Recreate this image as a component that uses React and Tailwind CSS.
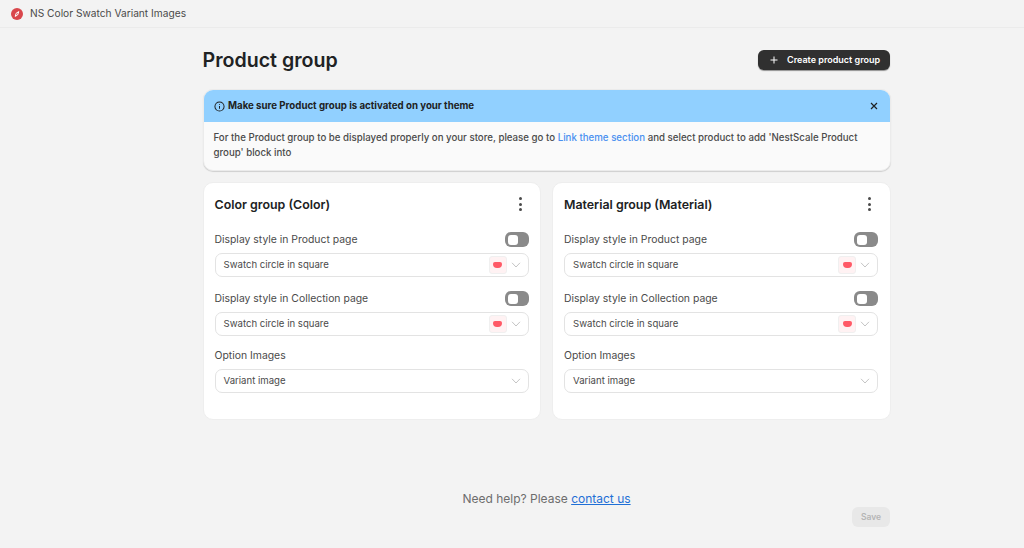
import React from "react";

const Info = () => (
  <svg width="11" height="11" viewBox="0 0 12 12" fill="none" stroke="#202223" strokeWidth="1.1" className="shrink-0">
    <circle cx="6" cy="6" r="5" />
    <path d="M6 5.4v3M6 3.4v.8" />
  </svg>
);

const Chevron = () => (
  <svg width="10" height="6" viewBox="0 0 10 6" fill="none" stroke="#c4c4c4" strokeWidth="1" className="shrink-0">
    <path d="M1 .8 5 5 9 .8" />
  </svg>
);

const Dots = () => (
  <div className="flex flex-col gap-[2.5px] mr-[7px] mb-[2px]">
    <span className="w-[3px] h-[3px] rounded-full bg-[#4a4a4a]" />
    <span className="w-[3px] h-[3px] rounded-full bg-[#4a4a4a]" />
    <span className="w-[3px] h-[3px] rounded-full bg-[#4a4a4a]" />
  </div>
);

const Toggle = () => (
  <div className="w-[24px] h-[15px] rounded-[6px] bg-[#8a8a8a] flex items-center pl-[3px]">
    <span className="w-[10px] h-[10px] rounded-[3px] bg-white" />
  </div>
);

const Select = ({ label, swatch }) => (
  <div className="h-[24px] rounded-[7px] border border-[#e3e3e3] bg-white flex items-center pl-[8px] pr-[7px] text-[9.6px] text-[#4a4a4a]">
    <span className="flex-1">{label}</span>
    {swatch && (
      <span className="w-[18px] h-[18px] rounded-[3px] border border-[#f0f0f0] bg-[#fff2f3] flex items-center justify-center mr-[4px]">
        <span className="w-[9px] h-[6px] rounded-b-[4px] rounded-t-[2px] bg-[#ff5a67]" />
      </span>
    )}
    <Chevron />
  </div>
);

const Row = ({ label }) => (
  <div className="flex items-center justify-between h-[15px] mb-[6px]">
    <span className="text-[10.4px] text-[#4a4a4a]">{label}</span>
    <Toggle />
  </div>
);

const Card = ({ title }) => (
  <div className="flex-1 h-[238px] rounded-[10px] bg-white border border-[#eeeeee] pt-[12px] pl-[11px] pr-[11.5px]">
    <div className="flex items-center justify-between h-[20px] mb-[17px]">
      <h2 className="text-[12.4px] font-semibold text-[#202223]">{title}</h2>
      <Dots />
    </div>
    <Row label="Display style in Product page" />
    <Select label="Swatch circle in square" swatch />
    <div className="h-[14px]" />
    <Row label="Display style in Collection page" />
    <Select label="Swatch circle in square" swatch />
    <div className="h-[12px]" />
    <div className="text-[10.4px] text-[#4a4a4a] h-[15px] mb-[6px] leading-[15px]">Option Images</div>
    <Select label="Variant image" />
  </div>
);

export default function App() {
  return (
    <div className="w-[1024px] h-[548px] bg-[#f3f3f3] overflow-hidden flex flex-col font-['Inter',sans-serif]">
      <header className="h-[28px] shrink-0 border-b border-[#ebebeb] flex items-center pl-[11px] gap-[7px]">
        <svg width="12" height="12" viewBox="0 0 12 12">
          <circle cx="6" cy="6" r="6" fill="#d9474c" />
          <path d="M7.8 3.6 6.6 7 4.2 8.4 5.2 5.2Z" fill="none" stroke="#fff" strokeWidth="1" />
        </svg>
        <span className="text-[10.2px] text-[#4a4a4a]">NS Color Swatch Variant Images</span>
      </header>

      <main className="w-[688px] ml-[202.5px] pt-[18px]">
        <div className="flex items-center justify-between h-[28px] mb-[15px] pr-[0.5px]">
          <h1 className="text-[19.6px] font-semibold text-[#202223] pt-[1px]">Product group</h1>
          <button className="w-[132px] h-[20px] rounded-[6px] bg-[#303030] text-white text-[9px] font-semibold flex items-center pl-[12px] gap-[9px] shadow-[0_1px_1px_rgba(0,0,0,0.4)]">
            <svg width="8" height="8" viewBox="0 0 8 8" stroke="#fff" strokeWidth="1"><path d="M4 .5v7M.5 4h7" /></svg>
            Create product group
          </button>
        </div>

        <section className="rounded-[10px] bg-[#fafafa] border border-[#ebebeb] shadow-[0_1px_1px_rgba(0,0,0,0.15)] overflow-hidden mb-[11px] h-[82px]">
          <div className="h-[32px] bg-[#91d0ff] flex items-center pl-[10px] pr-[12px] gap-[3.5px]">
            <Info />
            <span className="flex-1 text-[9.7px] font-bold text-[#202223]">Make sure Product group is activated on your theme</span>
            <svg width="8" height="8" viewBox="0 0 8 8" stroke="#202223" strokeWidth="1.2"><path d="m1 1 6 6M7 1 1 7" /></svg>
          </div>
          <p className="pl-[10px] pr-[26px] pt-[8px] text-[9.7px] leading-[15px] font-medium text-[#4a4a4a]">
            For the Product group to be displayed properly on your store, please go to{" "}
            <span className="text-[#4a90f0]">Link theme section</span> and select product to add 'NestScale Product group' block into
          </p>
        </section>

        <div className="flex gap-[11px]">
          <Card title="Color group (Color)" />
          <Card title="Material group (Material)" />
        </div>

        <div className="mt-[69px] text-center text-[12px] text-[#6d6d6d] h-[20px] leading-[20px]">
          Need help? Please <a className="text-[#1f6fd6] underline">contact us</a>
        </div>
        <div className="flex justify-end mt-[-2px] pr-[0.5px]">
          <button className="w-[38px] h-[20px] rounded-[6px] bg-[#e8e8e8] text-[#b5b5b5] text-[8.5px] font-semibold">Save</button>
        </div>
      </main>
    </div>
  );
}
